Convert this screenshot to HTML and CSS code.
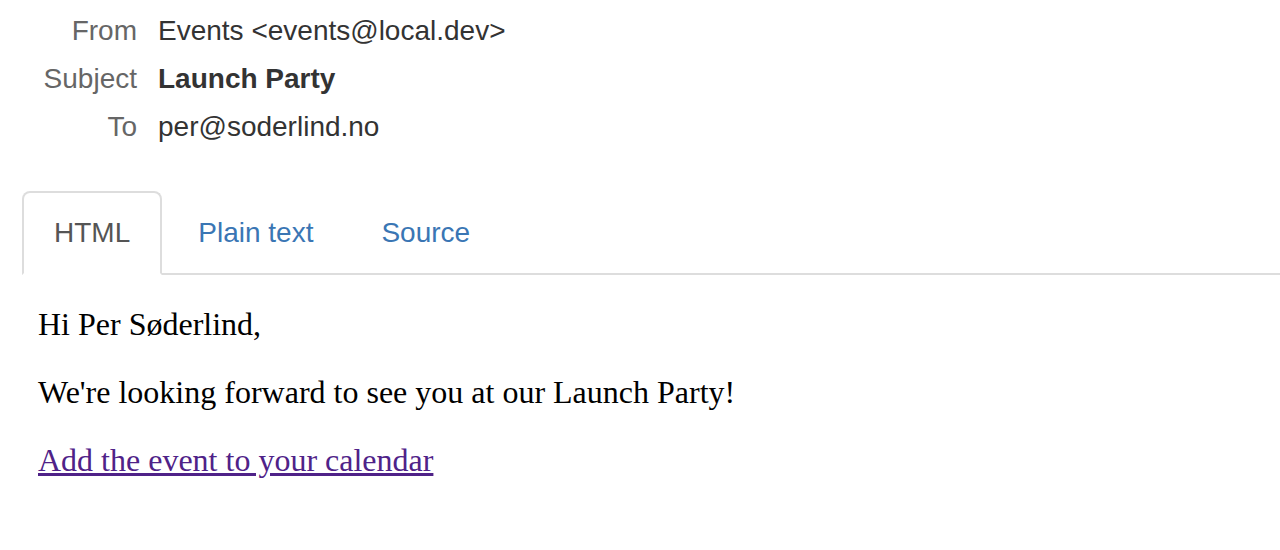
FILE: index.html
```html
<!DOCTYPE html>
<html>
<head>
<meta charset="utf-8">
<link rel="stylesheet" href="styles.css">
</head>
<body>
<div class="page">
  <dl class="headers">
    <dt>From</dt><dd>Events &lt;events@local.dev&gt;</dd>
    <dt>Subject</dt><dd class="subject">Launch Party</dd>
    <dt>To</dt><dd>per@soderlind.no</dd>
  </dl>
  <ul class="tabs">
    <li class="tab active"><a>HTML</a></li>
    <li class="tab"><a>Plain text</a></li>
    <li class="tab"><a>Source</a></li>
  </ul>
  <div class="mail">
    <p>Hi Per Søderlind,</p>
    <p>We're looking forward to see you at our Launch Party!</p>
    <p><a class="cal" href="#">Add the event to your calendar</a></p>
  </div>
</div>
</body>
</html>
```
FILE: styles.css
```css
html, body { margin: 0; padding: 0; background: #fff; }
body { font-family: "Liberation Sans", Arial, sans-serif; font-size: 28px; color: #333; }
.page { padding: 7px 0 0 22px; }
.headers {
  display: grid;
  grid-template-columns: 115px 1fr;
  column-gap: 21px;
  margin: 0;
  line-height: 48px;
}
.headers dt { text-align: right; color: #666; }
.headers dd { margin: 0; color: #333; }
.headers .subject { font-weight: bold; }
.tabs {
  display: flex;
  list-style: none;
  margin: 40px 0 0 0;
  padding: 0;
  border-bottom: 2px solid #ddd;
  line-height: 40px;
}
.tab { margin-right: 4px; margin-bottom: -2px; }
.tab a {
  display: block;
  padding: 20px 30px;
  border: 2px solid transparent;
  border-radius: 8px 8px 0 0;
  color: #3a76b4;
}
.tab.active a {
  color: #555;
  border-color: #ddd;
  border-bottom-color: #fff;
  background: #fff;
}
.mail {
  padding: 0 16px;
  font-family: "Liberation Serif", "Times New Roman", serif;
  font-size: 32px;
  color: #000;
}
.mail p { margin: 31px 0; }
.cal { color: #4f2288; }
```
